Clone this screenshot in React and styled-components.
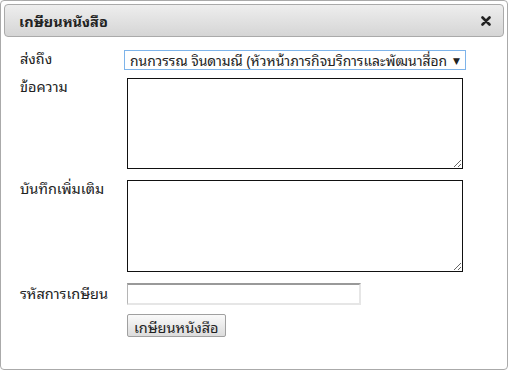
import React from 'react';
import styled, { createGlobalStyle } from 'styled-components';

const GlobalStyle = createGlobalStyle`
    html, body {
        margin: 0;
        padding: 0;
        background: #fff;
    }
    body {
        font-family: Tahoma, "Noto Sans Thai Looped", Loma, "Noto Sans Thai", "Noto Sans", "DejaVu Sans", sans-serif;
        font-size: 14.5px;
        color: #222;
    }
`

const Dialog = styled.div`
    box-sizing: border-box;
    width: 508px;
    height: 370px;
    border: 1px solid #aaa;
    border-radius: 4px;
    padding: 3px;
    background: #fff;
`
const TitleBar = styled.div`
    box-sizing: border-box;
    height: 33px;
    display: flex;
    align-items: center;
    justify-content: space-between;
    padding: 0 12px 0 14px;
    border: 1px solid #aaa;
    border-radius: 4px;
    background: linear-gradient(#eeeeee, #d5d5d5);
`
const Title = styled.span`
    font-weight: bold;
    font-size: 14.5px;
    color: #222;
`
const CloseButton = styled.span`
    display: flex;
    width: 10px;
    height: 10px;
    cursor: pointer;
`
const Form = styled.div`
    display: flex;
    flex-direction: column;
    padding: 0 0 0 16px;
`
const Row = styled.div`
    display: flex;
    align-items: flex-start;
    margin-top: ${props => props.gap}px;
`
const Label = styled.div`
    width: ${props => props.narrow ? 104 : 107}px;
    flex-shrink: 0;
    line-height: 16px;
    padding-top: ${props => props.top || 0}px;
`
const SelectBox = styled.div`
    box-sizing: border-box;
    width: 342px;
    height: 20px;
    display: flex;
    align-items: center;
    border: 1px solid #7eb4ea;
    background: #fff;
    padding: 0 5px 0 5px;
    font-size: 13.9px;
    cursor: default;
`
const SelectText = styled.span`
    flex: 1;
    min-width: 0;
    overflow: hidden;
    white-space: nowrap;
    text-overflow: clip;
`
const Arrow = styled.span`
    flex-shrink: 0;
    font-size: 9px;
    margin-left: 6px;
`
const TextArea = styled.textarea`
    box-sizing: border-box;
    width: 336px;
    height: ${props => props.h}px;
    margin: 0;
    border: 1px solid #111;
    font-family: inherit;
    font-size: 13px;
`
const TextInput = styled.input`
    box-sizing: border-box;
    width: 234px;
    height: 22px;
    margin: 0;
    border: 2px solid #e6e6e6;
    border-top-color: #999;
    border-left-color: #b5b5b5;
    border-left-width: 1px;
    outline: none;
`
const Button = styled.button`
    box-sizing: border-box;
    height: 23px;
    padding: 0 6px;
    margin: 0 0 0 107px;
    border: 1px solid #a0a0a0;
    border-radius: 2px;
    background: linear-gradient(#fafafa, #dcdcdc);
    font-family: inherit;
    font-size: 14.5px;
    color: #222;
    cursor: pointer;
`

const App = () => (
    <>
        <GlobalStyle />
        <Dialog>
            <TitleBar>
                <Title>เกษียนหนังสือ</Title>
                <CloseButton>
                    <svg width="10" height="10" viewBox="0 0 10 10">
                        <path d="M1.5 1.5 L8.5 8.5 M8.5 1.5 L1.5 8.5" stroke="#222" strokeWidth="2.6" strokeLinecap="round" />
                    </svg>
                </CloseButton>
            </TitleBar>
            <Form>
                <Row gap={13}>
                    <Label narrow top={0}>ส่งถึง</Label>
                    <SelectBox>
                        <SelectText>กนกวรรณ จินดามณี (หัวหน้าภารกิจบริการและพัฒนาสื่อการเรียนรู้)</SelectText>
                        <Arrow>▼</Arrow>
                    </SelectBox>
                </Row>
                <Row gap={8}>
                    <Label top={0}>ข้อความ</Label>
                    <TextArea h={91} />
                </Row>
                <Row gap={11}>
                    <Label top={0}>บันทึกเพิ่มเติม</Label>
                    <TextArea h={92} />
                </Row>
                <Row gap={11}>
                    <Label top={2}>รหัสการเกษียน</Label>
                    <TextInput />
                </Row>
                <Row gap={9}>
                    <Button>เกษียนหนังสือ</Button>
                </Row>
            </Form>
        </Dialog>
    </>
);

export default App;
